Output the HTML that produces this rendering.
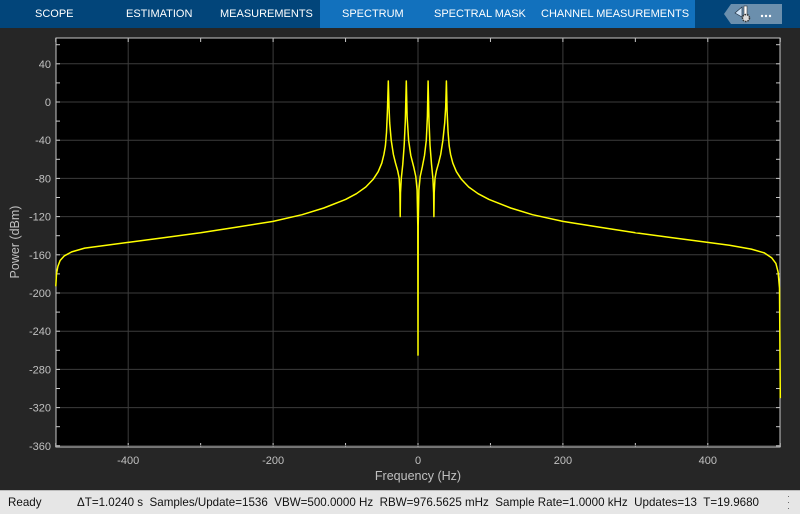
<!DOCTYPE html>
<html><head><meta charset="utf-8"><style>
body{margin:0;width:800px;height:513px;background:#262626;font-family:"Liberation Sans",sans-serif;overflow:hidden;position:relative}
.tabs{position:absolute;left:0;top:0;width:800px;height:28px;background:#02457a}
.act{position:absolute;left:320px;top:0;width:375px;height:28px;background:#1271bd}
.t{position:absolute;top:8px;color:#fff;font-size:11px;white-space:nowrap}
.status{position:absolute;left:0;top:490px;width:800px;height:23px;background:#e6e6e6;border-top:1px solid #bcbcbc;font-size:11.6px;color:#111}
.status span{position:absolute;top:5px;white-space:nowrap}
</style></head><body>
<div class="tabs"></div><div class="act"></div>
<div class="t" style="left:35px">SCOPE</div>
<div class="t" style="left:126px">ESTIMATION</div>
<div class="t" style="left:220px">MEASUREMENTS</div>
<div class="t" style="left:342px">SPECTRUM</div>
<div class="t" style="left:434px">SPECTRAL MASK</div>
<div class="t" style="left:541px">CHANNEL MEASUREMENTS</div>
<svg style="position:absolute;left:720px;top:3px" width="66" height="22"><polygon points="4,11 11,1 62,1 62,21 11,21" fill="#6b8fad"/><path d="M15,10 L22,4 L22,14 Z" fill="#cfe3f7" stroke="#234" stroke-width="0.7"/><rect x="24" y="3" width="3" height="10" fill="#fff" stroke="#333" stroke-width=".6"/><circle cx="26" cy="15" r="3.5" fill="#ddd" stroke="#333" stroke-width="1.5" stroke-dasharray="1.5 1"/><circle cx="42" cy="13" r="1.2" fill="#fff"/><circle cx="46" cy="13" r="1.2" fill="#fff"/><circle cx="50" cy="13" r="1.2" fill="#fff"/></svg>
<svg id="plot" style="position:absolute;left:0;top:0" width="800" height="490"></svg>
<div class="status"><span style="left:8px">Ready</span><span style="left:77px">ΔT=1.0240 s&nbsp; Samples/Update=1536&nbsp; VBW=500.0000 Hz&nbsp; RBW=976.5625 mHz&nbsp; Sample Rate=1.0000 kHz&nbsp; Updates=13&nbsp; T=19.9680</span><span style="left:787px;top:2px;font-size:9px;line-height:6px;color:#555">·<br>·<br>·</span></div>
<script>
var s=document.getElementById('plot'),L=56,R=780,T=38,B=447;
function X(f){return 418+0.7245*f}function Y(d){return 102-0.955*d}
var h='<rect x="'+L+'" y="'+T+'" width="'+(R-L)+'" height="'+(B-T)+'" fill="#000" stroke="#c8c8c8" stroke-width="1"/>';
for(var f=-400;f<=400;f+=200){var x=X(f);h+='<line x1="'+x+'" y1="'+T+'" x2="'+x+'" y2="'+B+'" stroke="#3c3c3c"/>';h+='<text x="'+x+'" y="'+(B+17)+'" fill="#c0c0c0" font-size="11" text-anchor="middle">'+f+'</text>';}
for(var f=-500;f<=500;f+=100){var x=X(f);h+='<line x1="'+x+'" y1="'+T+'" x2="'+x+'" y2="'+(T+4)+'" stroke="#c8c8c8"/><line x1="'+x+'" y1="'+B+'" x2="'+x+'" y2="'+(B-4)+'" stroke="#c8c8c8"/>';}
for(var d=40;d>=-360;d-=40){var y=Y(d);h+='<line x1="'+L+'" y1="'+y+'" x2="'+R+'" y2="'+y+'" stroke="#3c3c3c"/>';h+='<text x="'+(L-5)+'" y="'+(y+4)+'" fill="#c0c0c0" font-size="11" text-anchor="end">'+d+'</text>';}
for(var d=60;d>=-360;d-=20){var y=Y(d);if(y<T)continue;h+='<line x1="'+L+'" y1="'+y+'" x2="'+(L+4)+'" y2="'+y+'" stroke="#c8c8c8"/><line x1="'+R+'" y1="'+y+'" x2="'+(R-4)+'" y2="'+y+'" stroke="#c8c8c8"/>';}
var p=[[-500,-193],[-499,-180],[-497,-172],[-494,-166],[-488,-161],[-478,-157],[-460,-153],[-430,-150],[-400,-147],[-350,-142],[-300,-137],[-250,-131],[-200,-125],[-160,-118],[-130,-111],[-100,-102],[-85,-96],[-72,-89],[-62,-81],[-55,-73],[-50,-64],[-47,-55],[-45,-46],[-43.5,-32],[-42.2,-10],[-41,22],[-40,-5],[-39,-22],[-37,-40],[-34,-55],[-31,-64],[-28,-72],[-26,-80],[-25,-95],[-24.6,-120],[-24.2,-95],[-23,-80],[-21,-65],[-19,-45],[-17.5,-20],[-16.2,22],[-15,-15],[-13,-40],[-10,-56],[-6,-68],[-3,-78],[-1.2,-92],[-0.3,-130],[0,-265],[0.3,-130],[1.2,-92],[3,-78],[6,-68],[9,-56],[11.5,-40],[13,-15],[14,22],[15.2,-20],[16.6,-45],[18.6,-65],[20.6,-80],[21.6,-95],[22,-120],[22.4,-95],[23.4,-80],[25.4,-72],[28.4,-64],[31.4,-55],[34.4,-40],[36.8,-22],[38.2,-5],[39.2,22],[40.2,-10],[41.5,-32],[43,-46],[45,-55],[48,-64],[53,-73],[60,-81],[70,-89],[83,-96],[98,-102],[128,-111],[158,-118],[200,-125],[250,-131],[300,-137],[350,-142],[400,-147],[430,-150],[460,-154],[478,-158],[488,-163],[494,-169],[497,-178],[499,-195],[500,-310]];
var d='';p.forEach(function(q,i){d+=(i?'L':'M')+X(q[0]).toFixed(1)+','+Y(q[1]).toFixed(1)});
h+='<path d="'+d+'" fill="none" stroke="#ffff00" stroke-width="1.5" stroke-linejoin="round"/>';
h+='<text x="418" y="480" fill="#c0c0c0" font-size="12.5" text-anchor="middle">Frequency (Hz)</text>';
h+='<text transform="translate(19,242) rotate(-90)" fill="#c0c0c0" font-size="12.5" text-anchor="middle">Power (dBm)</text>';
s.innerHTML=h;
</script>
</body></html>
